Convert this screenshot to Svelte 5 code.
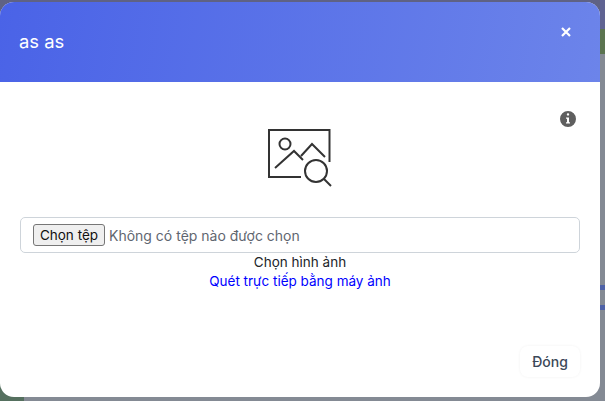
<script>
	let title = 'as as';
</script>

<div class="backdrop">
	<span class="page-strip top"></span>
	<span class="page-strip right-top"></span>
	<span class="page-strip right-green"></span>
	<span class="page-strip blue-one"></span>
	<span class="page-strip blue-two"></span>
	<span class="page-strip bottom-green"></span>
	<div class="modal">
		<header class="modal-header">
			<h5>{title}</h5>
			<button class="close" aria-label="Đóng">
				<svg viewBox="0 0 10 10" width="10" height="10" aria-hidden="true">
					<path d="M1 1 L9 9 M9 1 L1 9" />
				</svg>
			</button>
		</header>
		<div class="modal-body">
			<div class="info-row">
				<svg class="info" viewBox="0 0 16 16" width="16" height="16" aria-hidden="true">
					<path
						fill-rule="evenodd"
						d="M8 0a8 8 0 1 1 0 16A8 8 0 0 1 8 0zm-1.2 3.4a1.2 1.2 0 1 0 2.4 0 1.2 1.2 0 0 0-2.4 0zM6 6.4v1.3h1v3.6H6v1.3h4v-1.3H9V6.4z"
					/>
				</svg>
			</div>
			<div class="scan-icon">
				<svg viewBox="0 0 66 62" width="66" height="62" aria-hidden="true">
					<path d="M34 49H2V2h60.5v32" />
					<circle cx="18" cy="16" r="5.5" />
					<path d="M8 40 L27 23 L36 32 M34 28 L45 16 L58 29" />
					<circle cx="49" cy="43" r="11" />
					<path d="M57 51 L64 58" />
				</svg>
			</div>
			<div class="file-input">
				<button class="file-button">Chọn tệp</button>
				<span class="file-name">Không có tệp nào được chọn</span>
			</div>
			<div class="hint">Chọn hình ảnh</div>
			<a class="scan-link" href="#scan">Quét trực tiếp bằng máy ảnh</a>
		</div>
		<footer class="modal-footer">
			<button class="close-button">Đóng</button>
		</footer>
	</div>
</div>

<style>
	:global(body) {
		margin: 0;
		background: #848a94;
	}

	.backdrop {
		position: relative;
		width: 605px;
		height: 401px;
		box-sizing: border-box;
		padding: 2px 5px 4px 0;
		overflow: hidden;
		font-family: Inter, "Noto Sans", sans-serif;
	}

	.page-strip {
		position: absolute;
	}

	.top {
		left: 0;
		top: 0;
		width: 605px;
		height: 14px;
		background: #5f6284;
	}

	.right-top {
		right: 0;
		top: 0;
		width: 5px;
		height: 29px;
		background: #5f6392;
	}

	.right-green {
		right: 0;
		top: 29px;
		width: 5px;
		height: 25px;
		background: #5b7450;
	}

	.blue-one {
		right: 0;
		top: 285px;
		width: 5px;
		height: 5px;
		background: #4e62a8;
	}

	.blue-two {
		right: 0;
		top: 305px;
		width: 5px;
		height: 5px;
		background: #4e62a8;
	}

	.bottom-green {
		left: 0;
		bottom: 0;
		width: 24px;
		height: 30px;
		background: #55705f;
	}

	.modal {
		position: relative;
		display: flex;
		flex-direction: column;
		height: 100%;
		background: #fff;
		border-radius: 14px;
		overflow: hidden;
	}

	.modal-header {
		display: flex;
		justify-content: space-between;
		height: 80px;
		flex: none;
		padding: 0 29px 0 19px;
		box-sizing: border-box;
		background: linear-gradient(100deg, #4a63e7, #6c84ea);
		color: #fff;
	}

	h5 {
		margin: 0;
		font-size: 18.4px;
		font-weight: 400;
		line-height: 78px;
	}

	.close {
		align-self: flex-start;
		margin-top: 25px;
		padding: 0;
		border: 0;
		background: none;
		display: flex;
	}

	.close path {
		stroke: #fff;
		stroke-width: 2.2;
		fill: none;
	}

	.modal-body {
		flex: 1;
		padding: 29px 20px 0;
	}

	.info-row {
		display: flex;
		justify-content: flex-end;
		height: 16px;
		padding-right: 4px;
	}

	.info path {
		fill: #5f5f5f;
	}

	.scan-icon {
		display: flex;
		justify-content: center;
		padding-top: 1px;
		margin-bottom: 27px;
	}

	.scan-icon svg * {
		fill: none;
		stroke: #333;
		stroke-width: 2;
	}

	.file-input {
		display: flex;
		align-items: center;
		gap: 4px;
		height: 36px;
		box-sizing: border-box;
		padding: 0 12px;
		border: 1px solid #ced4da;
		border-radius: 5px;
		font-size: 14px;
		color: #5f6670;
	}

	.file-button {
		height: 22px;
		width: 72px;
		padding: 0;
		border: 1px solid #767676;
		border-radius: 3px;
		background: #efefef;
		color: #111;
		font: 13.5px Inter, sans-serif;
	}

	.hint {
		text-align: center;
		font-size: 13.5px;
		line-height: 19px;
		color: #212529;
	}

	.scan-link {
		display: block;
		text-align: center;
		font-size: 13.5px;
		line-height: 19px;
		color: #0000ff;
		text-decoration: none;
	}

	.modal-footer {
		display: flex;
		justify-content: flex-end;
		padding: 0 20px 20px;
	}

	.close-button {
		width: 60px;
		height: 31px;
		border: 0;
		border-radius: 8px;
		background: #fff;
		box-shadow: 0 0 3px rgba(0, 0, 0, 0.06);
		color: #3c4858;
		font: 500 14px Inter, sans-serif;
	}
</style>
